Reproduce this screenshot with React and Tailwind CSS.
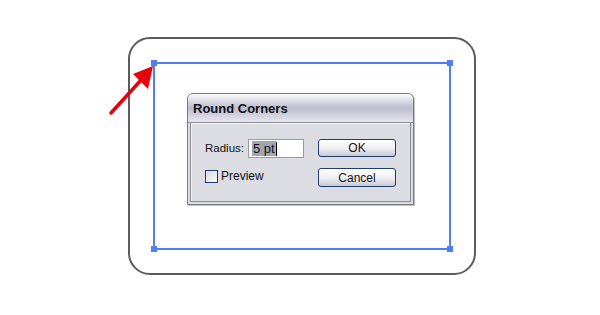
export default function App() {
  return (
    <div className="relative w-[600px] h-[315px] bg-white overflow-hidden" style={{ fontFamily: '"Liberation Sans", Arial, sans-serif' }}>
      {/* outer rounded rectangle */}
      <div className="ml-[128px] mt-[37px] w-[348px] h-[238px] border-2 border-[#5c5c5c] rounded-[22px]">
        {/* selection rectangle */}
        <div className="relative ml-[23px] mt-[23px] w-[298px] h-[188px] border-2 border-[#4f7ef3]">
          <span className="absolute -left-[4px] -top-[4px] w-[6px] h-[6px] bg-[#4f7ef3]" />
          <span className="absolute -right-[4px] -top-[4px] w-[6px] h-[6px] bg-[#4f7ef3]" />
          <span className="absolute -left-[4px] -bottom-[4px] w-[6px] h-[6px] bg-[#4f7ef3]" />
          <span className="absolute -right-[4px] -bottom-[4px] w-[6px] h-[6px] bg-[#4f7ef3]" />

          {/* dialog */}
          <div className="ml-[32px] mt-[29px] w-[227px] h-[112px] border border-[#7a7a82] rounded-t-[6px] bg-[#dcdce3] flex flex-col shadow-[1px_1px_0_#bdbdc4]">
            <div className="h-[29px] rounded-t-[5px] bg-gradient-to-b from-[#fbfbfd] via-[#bcbccd] to-[#e6e6ee] border-b border-[#8e8e98] flex items-center px-[5px] pt-[2px]">
              <span className="text-[13px] font-bold text-[#111]">Round Corners</span>
            </div>
            <div className="flex-1 mx-[2px] mb-[2px] border-x border-b border-[#8a8a92] shadow-[inset_1px_1px_0_#f4f4f7] flex px-[14px] pt-[16px]">
              <div className="flex flex-col gap-[9px] w-[112px]">
                <div className="flex items-center gap-[4px] text-[#111]">
                  <span className="text-[11.5px]">Radius:</span>
                  <div className="w-[56px] h-[19px] bg-white border border-[#9a9aa4] flex items-center pl-[3px]">
                    <span className="bg-[#a4a5b2] text-[13px] leading-[15px] px-[1px]">5 pt</span>
                    <span className="w-px h-[14px] bg-black" />
                  </div>
                </div>
                <div className="flex items-center gap-[3px] text-[12px] text-[#111]">
                  <span className="w-[13px] h-[13px] border border-[#1c3c6c] bg-gradient-to-br from-[#dcdce0] to-[#f8f8fa]" />
                  <span>Preview</span>
                </div>
              </div>
              <div className="ml-auto flex flex-col gap-[11px] mr-0">
                <button className="w-[78px] h-[18px] rounded-[3px] border border-[#1f3d6e] bg-gradient-to-b from-[#ffffff] via-[#f0f0f4] to-[#c9c9d6] text-[12px] text-[#111] leading-none">OK</button>
                <button className="w-[78px] h-[19px] rounded-[3px] border border-[#1f3d6e] bg-gradient-to-b from-[#ffffff] via-[#f0f0f4] to-[#c9c9d6] text-[12px] text-[#111] leading-none">Cancel</button>
              </div>
            </div>
          </div>
        </div>
      </div>

      {/* red arrow */}
      <svg className="absolute left-0 top-0" width="600" height="315">
        <line x1="111" y1="113" x2="142" y2="79" stroke="#e8000b" strokeWidth="3.5" strokeLinecap="round" />
        <polygon points="153,66 148,89 133,74" fill="#e8000b" />
      </svg>
    </div>
  )
}
